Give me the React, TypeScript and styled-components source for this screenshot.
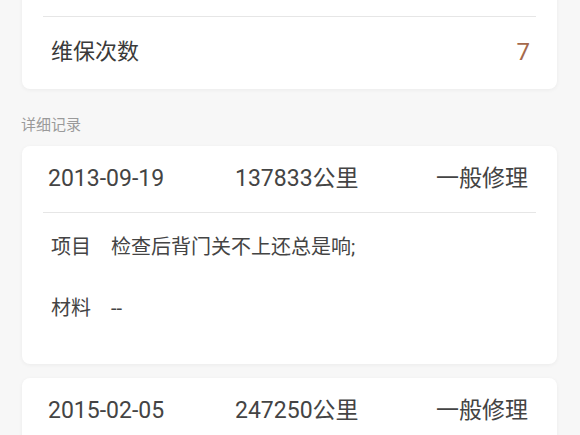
import React from 'react'
import styled, { createGlobalStyle } from 'styled-components'

const GlobalStyle = createGlobalStyle`
  html, body {
    margin: 0;
    padding: 0;
    background: #f7f7f7;
    font-family: Roboto, "Noto Sans CJK SC", sans-serif;
    color: #333;
  }
`

const Page = styled.div`
  width: 580px;
  height: 435px;
  overflow: hidden;
  box-sizing: border-box;
  padding: 0 23px 0 22px;
`

const Card = styled.section<{ $scrolled?: boolean }>`
  background: #fff;
  border-radius: 8px;
  box-shadow: 0 1px 4px rgba(0, 0, 0, 0.05);
  padding: 0 21px;
  margin-top: ${({ $scrolled }) => ($scrolled ? '-20px' : '0')};
  padding-top: ${({ $scrolled }) => ($scrolled ? '36px' : '0')};
  & + & {
    margin-top: 14px;
  }
`

const StatRow = styled.div`
  display: flex;
  align-items: center;
  justify-content: space-between;
  height: 73px;
  padding: 0 6px 2px 8px;
  box-sizing: border-box;
  border-top: 1px solid #e6e6e6;
  font-size: 22px;
  line-height: 30px;
  color: #3a3a3a;
`

const StatValue = styled.span`
  color: #a5694c;
  font-size: 24px;
`

const SectionTitle = styled.div`
  font-size: 15px;
  line-height: 20px;
  color: #9a9a9a;
  margin: 26px 0 11px -1px;
`

const RecordHead = styled.div`
  display: grid;
  grid-template-columns: 187px 1fr auto;
  align-items: center;
  height: 66px;
  padding: 0 8px 0 5px;
  border-bottom: 1px solid #e6e6e6;
  font-size: 23px;
  line-height: 30px;
  color: #444;
`

const Kind = styled.span`
  font-size: 23px;
`

const Details = styled.div`
  display: flex;
  flex-direction: column;
  gap: 31px;
  padding: 19px 0 41px 8px;
`

const Item = styled.div`
  display: flex;
  gap: 20px;
  font-size: 20px;
  line-height: 30px;
  color: #444;
`

const ItemLabel = styled.span`
  flex: none;
`

type Record = {
  date: string
  km: number
  kind: string
  project?: string
  material?: string
}

const records: Record[] = [
  { date: '2013-09-19', km: 137833, kind: '一般修理', project: '检查后背门关不上还总是响;', material: '--' },
  { date: '2015-02-05', km: 247250, kind: '一般修理' },
]

const RecordCard = ({ r }: { r: Record }) => (
  <Card>
    <RecordHead>
      <span>{r.date}</span>
      <span>{r.km}公里</span>
      <Kind>{r.kind}</Kind>
    </RecordHead>
    {r.project && (
      <Details>
        <Item>
          <ItemLabel>项目</ItemLabel>
          <span>{r.project}</span>
        </Item>
        <Item>
          <ItemLabel>材料</ItemLabel>
          <span>{r.material}</span>
        </Item>
      </Details>
    )}
  </Card>
)

export default function App() {
  return (
    <>
      <GlobalStyle />
      <Page>
        <Card $scrolled>
          <StatRow>
            <span>维保次数</span>
            <StatValue>7</StatValue>
          </StatRow>
        </Card>
        <SectionTitle>详细记录</SectionTitle>
        {records.map((r) => (
          <RecordCard key={r.date} r={r} />
        ))}
      </Page>
    </>
  )
}
